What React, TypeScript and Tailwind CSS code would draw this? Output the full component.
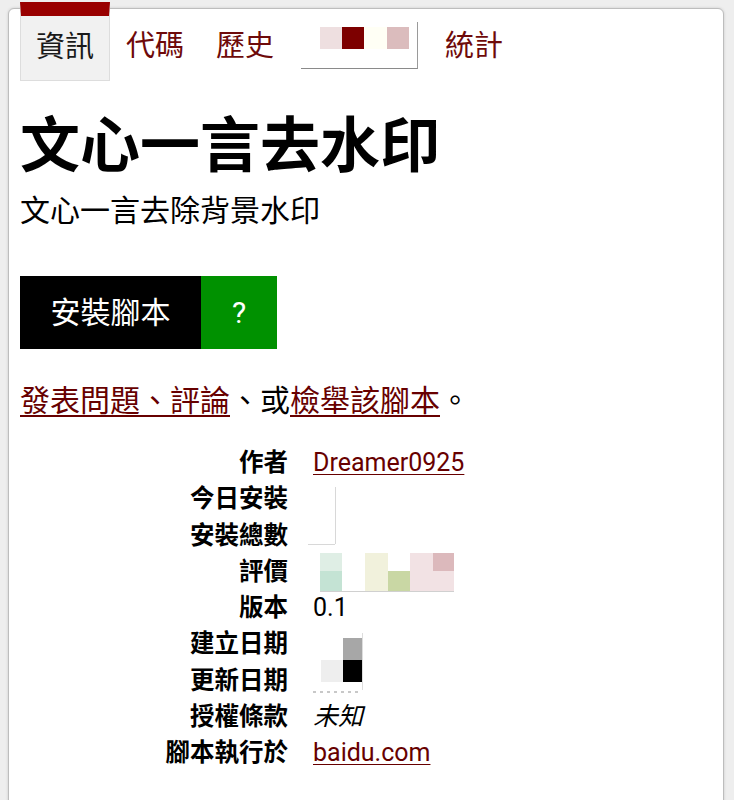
import React from "react";

const FONT = 'Roboto, "Noto Sans CJK TC", "Noto Sans CJK SC", sans-serif';

const linkCls = "text-[#670000] underline decoration-1 underline-offset-[3px]";

const rows: { label: string; value: React.ReactNode }[] = [
  { label: "作者", value: <a href="#" className={linkCls}>Dreamer0925</a> },
  { label: "今日安裝", value: <span>&nbsp;</span> },
  { label: "安裝總數", value: <span>&nbsp;</span> },
  { label: "評價", value: <span>&nbsp;</span> },
  { label: "版本", value: <span>0.1</span> },
  { label: "建立日期", value: <span>&nbsp;</span> },
  { label: "更新日期", value: <span>&nbsp;</span> },
  { label: "授權條款", value: <i>未知</i> },
  { label: "腳本執行於", value: <a href="#" className={linkCls}>baidu.com</a> },
];

function Tab({ children }: { children: React.ReactNode }) {
  return (
    <a href="#" className="px-4 pt-[30px] text-[29px] leading-none text-[#6e0a0a]">
      {children}
    </a>
  );
}

export default function App() {
  return (
    <div className="min-h-screen bg-[#eeeeee] pt-2 pl-2 pr-[10px] overflow-hidden" style={{ fontFamily: FONT }}>
      <div className="bg-white border border-[#bdbdbd] rounded-md shadow-[0_0_3px_rgba(0,0,0,0.15)] min-h-[900px] px-[11px]">
        {/* Tabs */}
        <nav className="flex items-start mt-[-7px] h-[79px]">
          <div className="w-[90px] h-[79px] border-t-[14px] border-t-[#990000] bg-[#f1f1f1] border-x border-b border-x-[#dddddd] border-b-[#dddddd] flex items-center justify-center text-[29px] leading-none text-[#1a1a1a] pb-[2px]">
            資訊
          </div>
          <Tab>代碼</Tab>
          <Tab>歷史</Tab>
          <div className="px-[11px] pt-[20px]">
            <div className="w-[117px] h-[47px] border-b border-r border-b-[#8a8a8a] border-r-[#9a9a9a] flex items-start pt-[5px] pl-[19px]">
              <div className="w-[22px] h-[22px] bg-[#eedfe0]" />
              <div className="w-[22px] h-[22px] bg-[#7d0000]" />
              <div className="w-[23px] h-[22px] bg-[#fffff5]" />
              <div className="w-[22px] h-[22px] bg-[#dbbcbd]" />
            </div>
          </div>
          <Tab>統計</Tab>
        </nav>

        {/* Title */}
        <h1 className="mt-[30px] text-[60px] leading-[72px] font-bold text-black">文心一言去水印</h1>
        <p className="mt-[10px] text-[30px] leading-[36px] text-black">文心一言去除背景水印</p>

        {/* Install button */}
        <div className="mt-[47px] flex h-[73px]">
          <a href="#" className="bg-black text-white w-[181px] flex items-center justify-center text-[30px]">
            安裝腳本
          </a>
          <a href="#" className="bg-[#009100] text-white w-[76px] flex items-center justify-center text-[30px]">
            ?
          </a>
        </div>

        {/* Links */}
        <p className="mt-[34px] text-[30px] leading-[36px] text-black">
          <a href="#" className="text-[#670000] underline decoration-[1.5px] underline-offset-[4px]">
            發表問題、評論
          </a>
          、或
          <a href="#" className="text-[#670000] underline decoration-[1.5px] underline-offset-[4px]">
            檢舉該腳本
          </a>
          。
        </p>

        {/* Info table */}
        <div className="relative mt-[26px]">
          <dl className="grid grid-cols-[268px_1fr] gap-x-[25px] leading-[36.25px] text-black">
            {rows.map((r) => (
              <React.Fragment key={r.label}>
                <dt className="text-right font-bold text-[24.5px]">{r.label}</dt>
                <dd className="text-[25px]">{r.value}</dd>
              </React.Fragment>
            ))}
          </dl>

          {/* Obscured (mosaic) values, drawn over the cells */}
          <div className="absolute inset-0 pointer-events-none">
            {/* installs */}
            <div className="absolute left-[315px] top-[42px] w-px h-[57px] bg-[#d8d8d8]" />
            <div className="absolute left-[288px] top-[99px] w-[27px] h-px bg-[#d8d8d8]" />

            {/* rating */}
            <div className="absolute left-[300px] top-[108px] flex items-stretch h-[39px] border-b border-b-[#d0d0d0] pr-0">
              <div className="flex flex-col w-[22px]">
                <div className="h-[18px] bg-[#dfeee5]" />
                <div className="flex-1 bg-[#c4e3d4]" />
              </div>
              <div className="w-[23px]" />
              <div className="w-[23px] bg-[#f1f1dc]" />
              <div className="flex flex-col w-[22px]">
                <div className="h-[18px]" />
                <div className="flex-1 bg-[#c9d7a4]" />
              </div>
              <div className="w-[23px] bg-[#f2e2e4]" />
              <div className="flex flex-col w-[21px]">
                <div className="h-[18px] bg-[#dcb9bc]" />
                <div className="flex-1 bg-[#f2e2e4]" />
              </div>
            </div>

            {/* dates */}
            <div className="absolute left-[301px] top-[188px] flex flex-col w-[42px] h-[57px] border-r border-r-[#dddddd] pt-[5px]">
              <div className="flex h-[22px]">
                <div className="w-[22px]" />
                <div className="w-[19px] bg-[#a7a7a7]" />
              </div>
              <div className="flex h-[22px]">
                <div className="w-[22px] bg-[#eeeeee]" />
                <div className="w-[19px] bg-black" />
              </div>
            </div>
            <div className="absolute left-[293px] top-[246px] w-[48px] h-[2px] bg-[repeating-linear-gradient(90deg,#c8c8c8_0_3px,transparent_3px_7px)]" />
          </div>
        </div>
      </div>
    </div>
  );
}
